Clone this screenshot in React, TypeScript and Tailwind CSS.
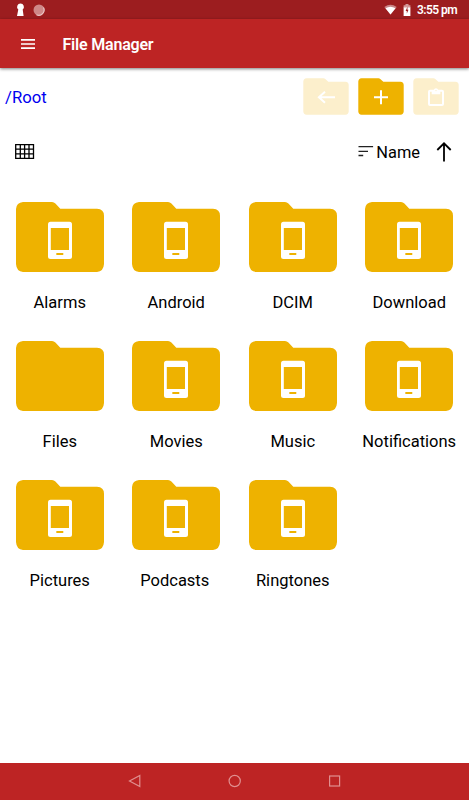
import type { ReactNode } from 'react';

type Entry = { name: string; device: boolean; nudge?: string };

const entries: Entry[] = [
  { name: 'Alarms', device: true },
  { name: 'Android', device: true },
  { name: 'DCIM', device: true },
  { name: 'Download', device: true },
  { name: 'Files', device: false },
  { name: 'Movies', device: true },
  { name: 'Music', device: true },
  { name: 'Notifications', device: true },
  { name: 'Pictures', device: true },
  { name: 'Podcasts', device: true, nudge: 'pr-[3px]' },
  { name: 'Ringtones', device: true },
];

function Folder({ device }: { device: boolean }) {
  return (
    <svg className="block h-[70px] w-[88px]" viewBox="0 0 88 70">
      <path
        d="M7 0H36Q38 0 39.4 1.5L44.3 6.7H81Q88 7 88 13.7V62Q87.5 69.5 81 70H7Q.5 69.5 0 62V7Q.5.5 7 0Z"
        fill="#eeb200"
      />
      {device && (
        <>
          <rect x="32" y="19.7" width="24" height="37.3" rx="2.5" fill="#fff" />
          <rect x="34.8" y="26" width="18.2" height="22" fill="#eeb200" />
          <rect x="40.3" y="51" width="7" height="2" rx=".5" fill="#eeb200" />
        </>
      )}
    </svg>
  );
}

function ToolFolder({ label, faded, children }: { label: string; faded?: boolean; children: ReactNode }) {
  return (
    <button aria-label={label} className="block">
      <svg className="block h-[37px] w-[46px]" viewBox="0 0 46 37">
        <path
          d="M3.5.3H20.5Q21.5.3 22.3 1L25.3 3.7H42.5Q45.7 4 45.7 7V33.5Q45.5 36.5 42.5 36.7H3.5Q.5 36.5.3 33.5V3.5Q.5.5 3.5.3Z"
          fill={faded ? '#fcefcc' : '#eeb200'}
        />
        {children}
      </svg>
    </button>
  );
}

export default function App() {
  return (
    <div className="flex h-[800px] w-[469px] flex-col overflow-hidden bg-white font-['Roboto','Liberation_Sans',sans-serif] text-black">
      <div className="flex h-[19px] shrink-0 items-center bg-[#9c1d1f] text-white">
        <svg className="ml-4 h-[14px] w-[9px]" viewBox="0 0 9 14">
          <path d="M4.5.5a3.4 3.4 0 0 1 2.2 6L7.6 13H1L2.3 6.5A3.4 3.4 0 0 1 4.5.5Z" fill="#fff" />
        </svg>
        <svg className="ml-2 h-3 w-3" viewBox="0 0 12 12">
          <circle cx="6" cy="6" r="5.5" fill="#cf8888" />
          <path d="M10.5 3.5a5.3 5.3 0 0 1-7 7.2" fill="none" stroke="#ecc8c8" strokeWidth="1.1" />
        </svg>
        <div className="grow" />
        <svg className="h-[11px] w-[13px]" viewBox="0 0 13 11">
          <path d="M.3 3Q6.5-1.5 12.7 3L6.5 10.5Z" fill="#c98486" />
          <path d="M1.5 4.2Q6.5 1.2 11.5 4.2L6.5 10.5Z" fill="#fff" />
        </svg>
        <svg className="ml-[6px] h-3 w-2" viewBox="0 0 8 12">
          <path d="M2.5 0h3v1.3H7.4V4H.6V1.3h1.9Z" fill="#d49a9b" />
          <path d="M.6 3.5h6.8V12H.6Z" fill="#fff" />
          <path d="M4.5 2.8 2.6 6.9h1.2v2.6l1.7-3.8H4.4Z" fill="#9c1d1f" />
        </svg>
        <span className="ml-[6px] mr-[12px] mt-px w-[40px] whitespace-nowrap text-[12px] font-semibold leading-[18px] tracking-[-0.55px]">
          3:55 pm
        </span>
      </div>

      <header className="z-10 flex h-[49px] shrink-0 items-center bg-[#bd2424] text-white shadow-[0_1px_3px_rgba(0,0,0,0.5)]">
        <button aria-label="Menu" className="ml-[21px] w-[14px]">
          <svg className="block h-[10px] w-[14px]" viewBox="0 0 14 10">
            <path d="M0 .9h14M0 5h14M0 9.1h14" stroke="#fff" strokeWidth="1.6" />
          </svg>
        </button>
        <h1 className="ml-[27.5px] mt-[3px] text-[16px] font-semibold leading-5 tracking-[-0.2px]">File Manager</h1>
      </header>

      <main className="flex grow flex-col">
        <div className="flex h-[58px] items-center justify-between pl-[5px] pr-[10px]">
          <span className="mt-px text-[16.7px] leading-5 text-[#0000f0]">/Root</span>
          <div className="mt-[-2px] flex gap-[8.8px]">
            <ToolFolder label="Back" faded>
              <path d="M32 19.3H15.7M22 13.8 15.9 19.3 22 24.8" fill="none" stroke="#fff" strokeWidth="2" />
            </ToolFolder>
            <ToolFolder label="New folder">
              <path d="M23 12.3v14M16 19.3h14" fill="none" stroke="#fff" strokeWidth="2" />
            </ToolFolder>
            <ToolFolder label="Paste" faded>
              <rect x="16" y="12.7" width="14" height="14.3" rx="1" fill="none" stroke="#fff" strokeWidth="2" />
              <path d="M18.7 12h2a2.4 2.4 0 0 1 4.6 0h2v4.3h-8.6Z" fill="#fff" />
              <circle cx="23" cy="12.6" r=".7" fill="#fcefcc" />
            </ToolFolder>
          </div>
        </div>

        <div className="flex h-[51px] items-center pl-[15px] pr-[17px]">
          <button aria-label="Grid view">
            <svg className="block h-[15px] w-5" viewBox="0 0 20 15" fill="none" stroke="#000">
              <path d="M.7.7h17.8v13.6H.7ZM5.3.7v13.6M9.6.7v13.6M14 .7v13.6M.7 5.2h17.8M.7 9.8h17.8" strokeWidth="1.3" />
            </svg>
          </button>
          <div className="grow" />
          <svg className="mt-[-1px] h-3 w-[18px]" viewBox="0 0 18 12">
            <path d="M.5 1.7h14.6M.5 6.3H10M.5 10.5h4.7" stroke="#222" strokeWidth="1.3" />
          </svg>
          <span className="mr-[16px] mt-[2px] text-[16.4px] leading-5">Name</span>
          <svg className="h-5 w-4" viewBox="0 0 16 20">
            <path d="M8 19.5V1.5M1.3 8 8 1.3 14.7 8" fill="none" stroke="#000" strokeWidth="1.8" />
          </svg>
        </div>

        <div className="ml-[1.5px] mt-[25px] grid w-[466px] grid-cols-4">
          {entries.map((entry) => (
            <div key={entry.name} className="flex h-[139px] flex-col items-center">
              <Folder device={entry.device} />
              <span className={`mt-[21px] text-[16.5px] leading-5 ${entry.nudge ?? ''}`}>{entry.name}</span>
            </div>
          ))}
        </div>
      </main>

      <nav className="flex h-[37px] shrink-0 items-center justify-center gap-[86px] bg-[#bd2424]">
        <svg className="mt-[-1px] h-[14px] w-[14px]" viewBox="0 0 14 14" fill="none" stroke="#e08f8f" strokeWidth="1.2">
          <path d="M11.8 1.5v11L1.5 7Z" />
        </svg>
        <svg className="mt-[-1px] h-[14px] w-[14px]" viewBox="0 0 14 14" fill="none" stroke="#e08f8f" strokeWidth="1.2">
          <circle cx="6.7" cy="7" r="5.6" />
        </svg>
        <svg className="mt-[-1px] h-[14px] w-[14px]" viewBox="0 0 14 14" fill="none" stroke="#e08f8f" strokeWidth="1.2">
          <rect x="1.6" y="2" width="10" height="10" />
        </svg>
      </nav>
    </div>
  );
}
